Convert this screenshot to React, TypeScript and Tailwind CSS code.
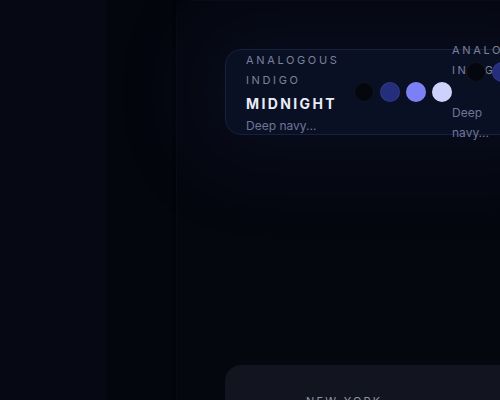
const swatches = ["#05070f", "#252e7c", "#7b80f7", "#ccd2fb"];

export default function App() {
  return (
    <div className="w-[500px] h-[400px] overflow-hidden flex bg-[#04060e] font-['Inter','Liberation_Sans',sans-serif]">
      {/* left rails */}
      <div className="w-[106px] shrink-0 bg-[#060813]" />
      <div className="w-[66px] shrink-0 bg-[#04060e]" />
      <div className="w-[4px] shrink-0 bg-[#03040a]" />

      {/* main panel */}
      <div className="flex-1 min-w-0 rounded-tl-2xl border-l border-t border-[#080b17] bg-[#05070f] pl-[48px] pt-[48px] flex flex-col">
        {/* palette card */}
        <div className="relative w-[320px] h-[86px] shrink-0 rounded-2xl border border-[#18203b] bg-[#0a1023] shadow-[0_0_80px_30px_rgba(30,40,100,0.16)] flex items-start pl-5">
          <div className="w-[100px] shrink-0">
            <div className="text-[11px] leading-5 tracking-[0.24em] text-[#7a809d] uppercase">
              Analogous Indigo
            </div>
            <div className="mt-1 text-[14px] leading-5 font-bold tracking-[0.17em] text-[#e9ecf6]">
              MIDNIGHT
            </div>
            <div className="mt-[2px] text-[12px] leading-5 text-[#6d7599] whitespace-nowrap">
              Deep navy...
            </div>
          </div>

          <div className="mt-[32px] ml-[8px] flex gap-[6px] shrink-0">
            {swatches.map((c) => (
              <div
                key={c}
                className="w-5 h-5 rounded-full border border-white/5"
                style={{ background: c }}
              />
            ))}
          </div>

          {/* next card, squeezed */}
          <div className="relative -mt-[10px] w-[46px] shrink-0">
            <div className="text-[11px] leading-5 tracking-[0.24em] text-[#7a809d] uppercase">
              Analogous Indigo
            </div>
            <div className="mt-[23px] text-[12px] leading-5 text-[#6d7599]">
              Deep navy...
            </div>
            <div className="absolute left-[14px] top-[22px] flex gap-[6px]">
              {swatches.map((c) => (
                <div
                  key={c}
                  className="w-5 h-5 rounded-full border border-white/5"
                  style={{ background: c }}
                />
              ))}
            </div>
          </div>
        </div>

        {/* next section card */}
        <div className="mt-[230px] w-[320px] h-[60px] shrink-0 rounded-2xl bg-[#12151f] pl-[81px] pt-[28px]">
          <div className="text-[11px] leading-4 tracking-[0.2em] text-[#8e94a6]">
            NEW YORK
          </div>
        </div>
      </div>
    </div>
  );
}
